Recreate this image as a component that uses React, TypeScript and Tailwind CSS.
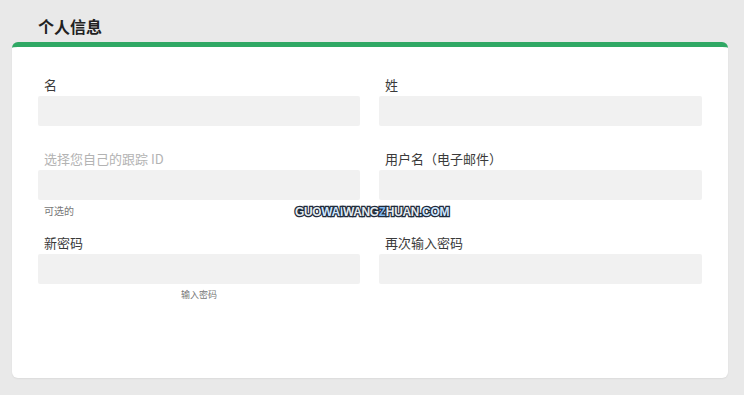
import React from "react";

const font = { fontFamily: '"Noto Sans CJK SC", "Noto Sans", sans-serif' };

function Field({ label, muted }: { label: string; muted?: boolean }) {
  return (
    <div>
      <div
        className={
          "h-[22px] pl-[6px] text-[13px] leading-[22px] " +
          (muted ? "text-[#b3b3b3]" : "text-[#3a3a3a]")
        }
      >
        {label}
      </div>
      <div className="h-[30px] rounded-[2px] bg-[#f1f1f1]" />
    </div>
  );
}

export default function App() {
  return (
    <div
      className="relative h-[395px] w-[744px] overflow-hidden bg-[#e9e9e9]"
      style={font}
    >
      {/* page heading */}
      <div className="h-[42px] pl-[38px] pt-[16px]">
        <h1 className="text-[16px] font-bold leading-[20px] text-[#222]">个人信息</h1>
      </div>

      {/* card */}
      <div className="ml-[12px] h-[336px] w-[716px] rounded-[6px] border-t-[5px] border-[#2fa864] bg-white pl-[26px] pt-[27px] shadow-[0_1px_2px_rgba(0,0,0,0.06)]">
        <div className="grid grid-cols-[322px_323px] gap-x-[19px]">
          <Field label="名" />
          <Field label="姓" />
        </div>

        <div className="mt-[22px] grid grid-cols-[322px_323px] items-start gap-x-[19px]">
          <div>
            <Field label="选择您自己的跟踪 ID" muted />
            <div className="mt-[4px] pl-[6px] text-[10px] leading-[14px] text-[#777]">可选的</div>
          </div>
          <Field label="用户名（电子邮件）" />
        </div>

        <div className="mt-[14px] grid grid-cols-[322px_323px] items-start gap-x-[19px]">
          <div>
            <Field label="新密码" />
            <div className="mt-[4px] text-center text-[9px] leading-[14px] text-[#777]">输入密码</div>
          </div>
          <Field label="再次输入密码" />
        </div>
      </div>

      {/* watermark */}
      <div
        className="absolute left-[295px] top-[204px] text-[12px] font-extrabold leading-[16px] tracking-[-0.35px] text-[#e6ebf0] [-webkit-text-stroke:2.5px_#1f2b3b] [paint-order:stroke_fill]"
        style={{ fontFamily: '"Liberation Sans", Arial, sans-serif' }}
      >
        GUO<span className="text-[#cfe6ff]">WAI</span>WANG
        <span className="text-[#7fb8f0]">Z</span>HUAN
        <span className="text-[#cfe6ff]">.COM</span>
      </div>
    </div>
  );
}
